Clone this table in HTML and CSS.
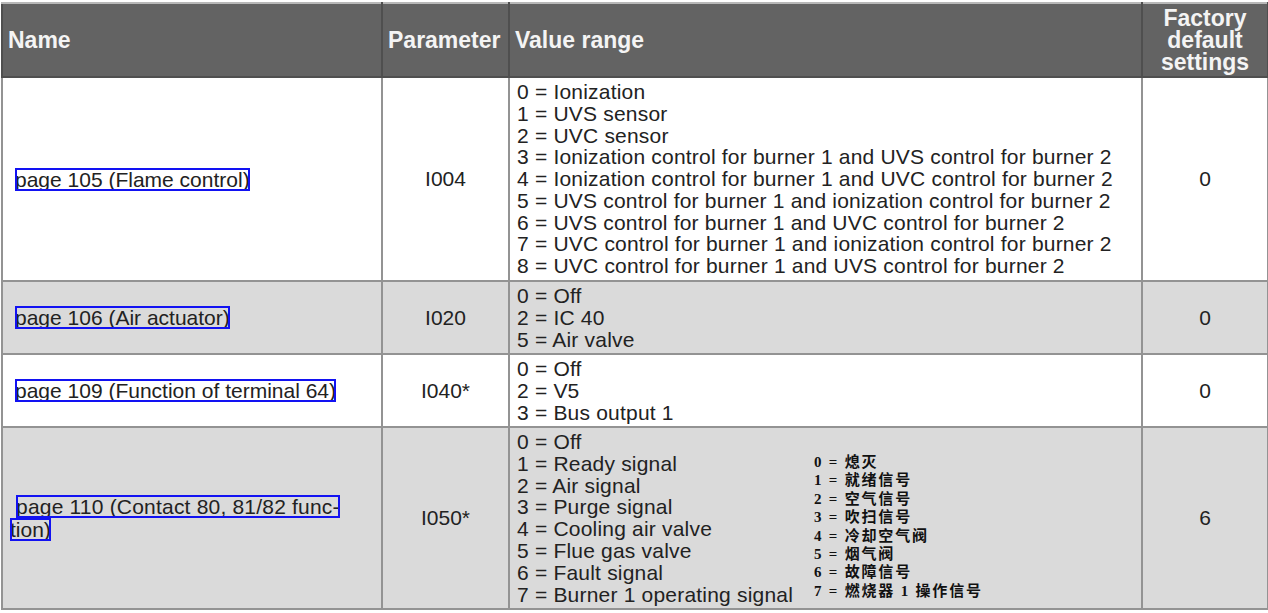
FILE: index.html
```html
<!DOCTYPE html>
<html>
<head>
<meta charset="utf-8">
<link rel="stylesheet" href="styles.css">
</head>
<body>
<table class="params">
  <colgroup>
    <col class="c-name"><col class="c-param"><col class="c-value"><col class="c-def">
  </colgroup>
  <thead>
    <tr class="head">
      <th class="h-left">Name</th>
      <th class="h-left">Parameter</th>
      <th class="h-left">Value range</th>
      <th class="h-center">Factory default settings</th>
    </tr>
  </thead>
  <tbody>
    <tr class="row r1">
      <td class="name"><span class="link">page 105 (Flame control)</span></td>
      <td class="center">I004</td>
      <td class="value">
        <div>0 = Ionization</div>
        <div>1 = UVS sensor</div>
        <div>2 = UVC sensor</div>
        <div>3 = Ionization control for burner 1 and UVS control for burner 2</div>
        <div>4 = Ionization control for burner 1 and UVC control for burner 2</div>
        <div>5 = UVS control for burner 1 and ionization control for burner 2</div>
        <div>6 = UVS control for burner 1 and UVC control for burner 2</div>
        <div>7 = UVC control for burner 1 and ionization control for burner 2</div>
        <div>8 = UVC control for burner 1 and UVS control for burner 2</div>
      </td>
      <td class="center">0</td>
    </tr>
    <tr class="row r2 alt">
      <td class="name"><span class="link">page 106 (Air actuator)</span></td>
      <td class="center">I020</td>
      <td class="value">
        <div>0 = Off</div>
        <div>2 = IC 40</div>
        <div>5 = Air valve</div>
      </td>
      <td class="center">0</td>
    </tr>
    <tr class="row r3">
      <td class="name"><span class="link">page 109 (Function of terminal 64)</span></td>
      <td class="center">I040*</td>
      <td class="value">
        <div>0 = Off</div>
        <div>2 = V5</div>
        <div>3 = Bus output 1</div>
      </td>
      <td class="center">0</td>
    </tr>
    <tr class="row r4 alt">
      <td class="name name-wrap"><span class="link first">page 110 (Contact 80, 81/82 func-</span><br><span class="link second">tion)</span></td>
      <td class="center">I050*</td>
      <td class="value">
        <div class="split">
          <div class="en">
            <div>0 = Off</div>
            <div>1 = Ready signal</div>
            <div>2 = Air signal</div>
            <div>3 = Purge signal</div>
            <div>4 = Cooling air valve</div>
            <div>5 = Flue gas valve</div>
            <div>6 = Fault signal</div>
            <div>7 = Burner 1 operating signal</div>
          </div>
          <div class="zh">
            <div>0 = 熄灭</div>
            <div>1 = 就绪信号</div>
            <div>2 = 空气信号</div>
            <div>3 = 吹扫信号</div>
            <div>4 = 冷却空气阀</div>
            <div>5 = 烟气阀</div>
            <div>6 = 故障信号</div>
            <div>7 = 燃烧器 1 操作信号</div>
          </div>
        </div>
      </td>
      <td class="center">6</td>
    </tr>
  </tbody>
</table>
</body>
</html>
```

FILE: styles.css
```css
html, body {
  margin: 0;
  padding: 0;
  background: #ffffff;
}

body {
  padding: 2px 0 0 1px;
  font-family: "Liberation Sans", Arial, sans-serif;
  color: #222222;
}

.params {
  border-collapse: collapse;
  width: 1266px;
  table-layout: fixed;
  font-size: 21px;
}

.c-name { width: 380px; }
.c-param { width: 127px; }
.c-value { width: 633px; }
.c-def { width: 126px; }

.params th,
.params td {
  border: 2px solid #939393;
  padding: 0;
}

.head {
  height: 74px;
  background: #636363;
}

.head th {
  color: #f4f4f4;
  font-weight: bold;
  font-size: 23px;
  line-height: 22px;
  border-color: #4f4f4f;
  border-top-color: #b8b8b8;
}

.h-left {
  text-align: left;
  vertical-align: middle;
  padding-left: 5px !important;
}

.h-center {
  text-align: center;
  vertical-align: middle;
}

.row { background: #ffffff; }
.row.alt { background: #dadada; }

.r1 { height: 204px; }
.r2 { height: 73px; }
.r3 { height: 73px; }
.r4 { height: 182px; }

.name {
  vertical-align: middle;
  padding-left: 12px !important;
  line-height: 22px;
}

.name-wrap {
  padding-left: 7px !important;
}

.link {
  display: inline-block;
  line-height: 21px;
  outline: 2px solid #1212f2;
  outline-offset: -2px;
  padding: 1px 0 1px 0;
}

.link.first {
  margin-left: 6px;
  letter-spacing: 0.2px;
}

.center {
  text-align: center;
  vertical-align: middle;
}

.value {
  vertical-align: top;
  padding: 3px 0 0 7px !important;
  line-height: 21.8px;
  letter-spacing: 0.2px;
}

.r1 .value { padding-top: 3px !important; line-height: 21.75px; }
.r2 .value, .r3 .value { padding-top: 3px !important; }

.split {
  display: flex;
  align-items: flex-start;
}

.en {
  width: 297px;
}

.zh {
  margin-top: 22px;
  font-family: "Liberation Serif", "Noto Sans CJK SC", serif;
  font-weight: bold;
  font-size: 15px;
  line-height: 18.4px;
  letter-spacing: 1.8px;
  color: #111111;
}
```
